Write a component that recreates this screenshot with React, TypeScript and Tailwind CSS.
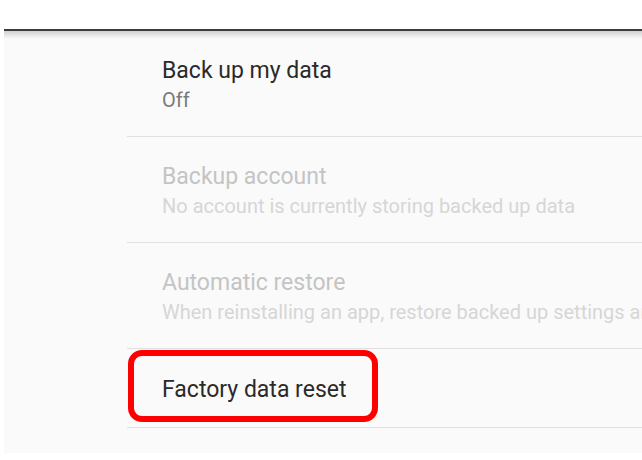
import React from 'react';

const rows = [
  { title: 'Back up my data', sub: 'Off', disabled: false },
  { title: 'Backup account', sub: 'No account is currently storing backed up data', disabled: true },
  { title: 'Automatic restore', sub: 'When reinstalling an app, restore backed up settings and data', disabled: true },
];

const App = () => {
  return (
    <div className="w-[642px] h-[460px] bg-white overflow-hidden" style={{ fontFamily: 'Roboto, "Noto Sans", sans-serif' }}>
      <div className="h-[29px]" />
      <div className="ml-[4px] h-[424px] bg-[#fafafa] relative">
        {/* top bar edge + shadow */}
        <div className="h-[2px] bg-[#3c3c3c]" />
        <div className="absolute left-0 right-0 top-[2px] h-[8px] bg-gradient-to-b from-[#d0d0d0] to-[#fafafa]" />

        {rows.map((r) => (
          <div key={r.title} className="relative">
            <div className="h-[105px] flex flex-col justify-center pl-[158px] pt-[4px] whitespace-nowrap overflow-hidden">
              <div className={`text-[23px] leading-[29px] ${r.disabled ? 'text-[#c4c4c4]' : 'text-[#2a2a2a]'}`}>{r.title}</div>
              <div className={`text-[20px] leading-[30px] ${r.disabled ? 'text-[#d6d6d6]' : 'text-[#7a7a7a]'}`}>{r.sub}</div>
            </div>
            <div className="ml-[123px] h-[1px] bg-[#e0e0e0]" />
          </div>
        ))}

        <div className="relative">
          <div className="h-[78px] flex items-center pl-[158px] pt-[2px]">
            <div className="text-[23px] leading-[29px] text-[#2a2a2a]">Factory data reset</div>
          </div>
          <div className="absolute left-[124px] top-[1px] w-[250px] h-[72px] border-[6px] border-[#ff0000] rounded-[14px]" />
          <div className="ml-[123px] h-[1px] bg-[#e0e0e0]" />
        </div>
      </div>
    </div>
  );
};

export default App;
